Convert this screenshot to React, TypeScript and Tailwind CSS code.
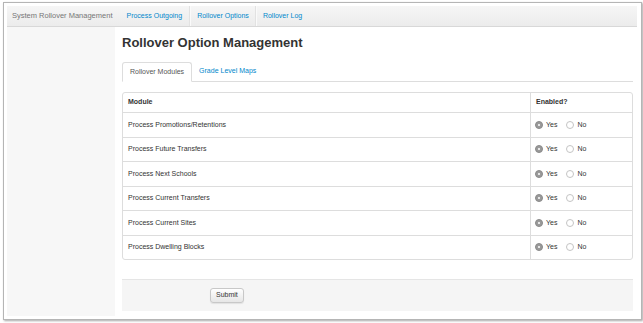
import React from 'react';

const modules = [
  'Process Promotions/Retentions',
  'Process Future Transfers',
  'Process Next Schools',
  'Process Current Transfers',
  'Process Current Sites',
  'Process Dwelling Blocks',
];

function Radio({ checked }: { checked: boolean }) {
  return checked ? (
    <span className="inline-flex h-[8px] w-[8px] items-center justify-center rounded-full border border-[#8a8a8a] bg-[#9a9a9a]">
      <span className="h-[2px] w-[2px] rounded-full bg-white" />
    </span>
  ) : (
    <span className="inline-block h-[8px] w-[8px] rounded-full border border-[#c4c4c4] bg-white" />
  );
}

export default function App() {
  return (
    <div className="h-[323px] w-[643px] bg-white pl-[3px] pt-[2px] font-['Liberation_Sans',Arial,sans-serif] text-[#333]">
      <div className="flex h-[318px] w-[639px] flex-col border border-[#b5b5b5] bg-white pb-[3px] pl-[3px] pr-[4px] pt-[3px] shadow-[1px_1px_2px_rgba(0,0,0,0.35)]">
        {/* top navbar */}
        <div className="flex h-[21px] shrink-0 items-center border-b border-[#d8d8d8] bg-gradient-to-b from-[#f6f6f6] to-[#ececec] text-[7px]">
          <span className="pl-[5px] pr-[14px] text-[7.5px] text-[#777]">System Rollover Management</span>
          <span className="pr-[7px] text-[#0088cc]">Process Outgoing</span>
          <span className="h-full w-[2px] border-l border-r border-l-[#e2e2e2] border-r-[#fafafa]" />
          <span className="px-[6px] text-[#0088cc]">Rollover Options</span>
          <span className="h-full w-[2px] border-l border-r border-l-[#e2e2e2] border-r-[#fafafa]" />
          <span className="px-[6px] text-[#0088cc]">Rollover Log</span>
        </div>

        <div className="flex flex-1">
          <div className="w-[108px] shrink-0 bg-[#f7f7f7]" />
          <div className="flex-1 pl-[7px] pr-[4px]">
            <h1 className="mt-[7px] text-[13px] font-bold leading-[18px] text-[#333]">Rollover Option Management</h1>

            {/* tabs */}
            <div className="mt-[10px] flex h-[20px] border-b border-[#ddd] text-[7px]">
              <div className="-mb-px flex h-[20px] items-center rounded-t-[3px] border border-b-white border-[#ddd] bg-white px-[7px] text-[#555]">
                Rollover Modules
              </div>
              <div className="flex items-center px-[7px] text-[#0088cc]">Grade Level Maps</div>
            </div>

            {/* modules table */}
            <div className="mt-[10px] rounded-[3px] border border-[#ddd] text-[7px]">
              <div className="flex h-[19px] items-center font-bold">
                <div className="w-[407px] pl-[5px]">Module</div>
                <div className="flex h-full flex-1 items-center border-l border-[#ddd] pl-[5px]">Enabled?</div>
              </div>
              {modules.map((m) => (
                <div key={m} className="flex h-[24.5px] items-center border-t border-[#ddd]">
                  <div className="w-[407px] pl-[5px]">{m}</div>
                  <div className="flex h-full flex-1 items-center gap-[3px] border-l border-[#ddd] pl-[4px]">
                    <Radio checked />
                    <span>Yes</span>
                    <span className="ml-[3px]" />
                    <Radio checked={false} />
                    <span>No</span>
                  </div>
                </div>
              ))}
            </div>

            {/* form actions */}
            <div className="mt-[19px] flex h-[32px] items-center border-t border-[#e5e5e5] bg-[#f5f5f5] pl-[88px]">
              <button className="h-[15px] rounded-[3px] border border-[#c8c8c8] bg-gradient-to-b from-white to-[#e6e6e6] px-[5px] text-[7px] text-[#333] shadow-[0_1px_1px_rgba(0,0,0,0.08)]">
                Submit
              </button>
            </div>
          </div>
        </div>
      </div>
    </div>
  );
}
